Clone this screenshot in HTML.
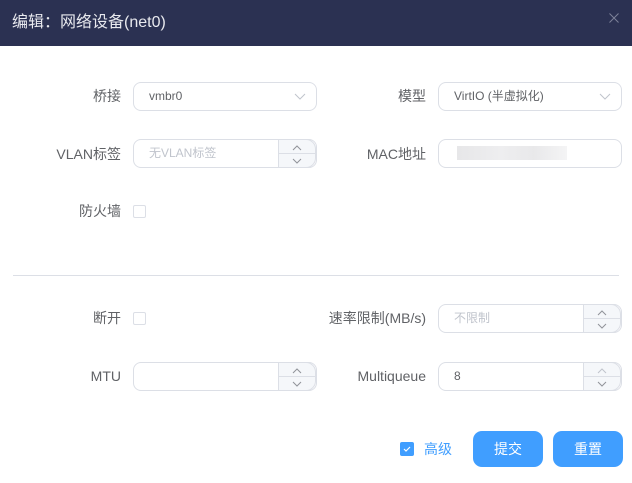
<!DOCTYPE html>
<html><head><meta charset="utf-8"><style>
*{box-sizing:border-box;margin:0;padding:0}
body{width:632px;height:483px;background:#fff;position:relative;overflow:hidden;font-family:"Liberation Sans","Noto Sans CJK SC",sans-serif;}
.hdr{position:absolute;left:0;top:0;width:632px;height:46px;background:#2b3152;color:#e8e9ee;font-size:16px;line-height:46px;padding-left:12px}
.x{position:absolute;left:609px;top:13px;width:10px;height:10px}
.lbl{position:absolute;font-size:14px;color:#606266;text-align:right;line-height:20px}
.in{position:absolute;height:29px;border:1px solid #dcdfe6;border-radius:8px;font-size:12px;color:#606266;line-height:27px;padding-left:15px;background:#fff}
.ph{color:#c0c4cc}
.ar{position:absolute;right:10px;top:7px;width:12px;height:12px}
.sp{position:absolute;right:0;top:-1px;width:38px;height:29px;border:1px solid #dcdfe6;background:#f5f7fa;border-radius:0 10px 10px 0}
.sp:after{content:"";position:absolute;left:0;right:0;top:13px;border-top:1px solid #dcdfe6}
.sp svg{position:absolute;left:13px;width:10px;height:6px}
.cb{position:absolute;width:13px;height:13px;border:1px solid #dcdfe6;border-radius:2px;background:#fff}
.btn{position:absolute;top:431px;height:36px;background:#409eff;color:#fff;border-radius:9px;font-size:14px;text-align:center;line-height:36px}
</style></head><body>
<div class="hdr">编辑：网络设备(net0)<svg class="x" viewBox="0 0 10 10"><path d="M0.5 0.5l9 9M9.5 0.5l-9 9" stroke="#7d8199" stroke-width="1"/></svg></div>

<div class="lbl" style="right:511px;top:86px">桥接</div>
<div class="in" style="left:133px;top:82px;width:184px">vmbr0<svg class="ar" viewBox="0 0 12 12"><path d="M1 4l5 5 5-5" fill="none" stroke="#c0c4cc" stroke-width="1"/></svg></div>
<div class="lbl" style="right:206px;top:86px">模型</div>
<div class="in" style="left:438px;top:82px;width:184px">VirtIO (半虚拟化)<svg class="ar" viewBox="0 0 12 12"><path d="M1 4l5 5 5-5" fill="none" stroke="#c0c4cc" stroke-width="1"/></svg></div>

<div class="lbl" style="right:511px;top:144px">VLAN标签</div>
<div class="in ph" style="left:133px;top:139px;width:184px">无VLAN标签<div class="sp"><svg style="top:5px" viewBox="0 0 10 6"><path d="M1 5l4-4 4 4" fill="none" stroke="#909399"/></svg><svg style="top:18px" viewBox="0 0 10 6"><path d="M1 1l4 4 4-4" fill="none" stroke="#909399"/></svg></div></div>
<div class="lbl" style="right:206px;top:144px">MAC地址</div>
<div class="in" style="left:438px;top:139px;width:184px"><div style="position:absolute;left:18px;top:6px;width:110px;height:14px;background:linear-gradient(90deg,#e4e4e6,#ececee 40%,#e6e6e8 70%,#f3f3f4);opacity:.9"></div></div>

<div class="lbl" style="right:511px;top:201px">防火墙</div>
<div class="cb" style="left:133px;top:205px"></div>

<div style="position:absolute;left:13px;top:275px;width:606px;border-top:1px solid #dcdfe6"></div>

<div class="lbl" style="right:511px;top:308px">断开</div>
<div class="cb" style="left:133px;top:312px"></div>
<div class="lbl" style="right:206px;top:308px">速率限制(MB/s)</div>
<div class="in ph" style="left:438px;top:304px;width:184px">不限制<div class="sp"><svg style="top:5px" viewBox="0 0 10 6"><path d="M1 5l4-4 4 4" fill="none" stroke="#909399"/></svg><svg style="top:18px" viewBox="0 0 10 6"><path d="M1 1l4 4 4-4" fill="none" stroke="#909399"/></svg></div></div>

<div class="lbl" style="right:511px;top:366px">MTU</div>
<div class="in" style="left:133px;top:362px;width:184px"><div class="sp"><svg style="top:5px" viewBox="0 0 10 6"><path d="M1 5l4-4 4 4" fill="none" stroke="#909399"/></svg><svg style="top:18px" viewBox="0 0 10 6"><path d="M1 1l4 4 4-4" fill="none" stroke="#909399"/></svg></div></div>
<div class="lbl" style="right:206px;top:366px">Multiqueue</div>
<div class="in" style="left:438px;top:362px;width:184px">8<div class="sp"><svg style="top:5px" viewBox="0 0 10 6"><path d="M1 5l4-4 4 4" fill="none" stroke="#c0c4cc"/></svg><svg style="top:18px" viewBox="0 0 10 6"><path d="M1 1l4 4 4-4" fill="none" stroke="#909399"/></svg></div></div>

<div style="position:absolute;left:400px;top:442px;width:14px;height:14px;background:#409eff;border-radius:2px"><svg width="14" height="14" viewBox="0 0 14 14"><path d="M4 7l2 2 4-4" fill="none" stroke="#fff" stroke-width="1.2"/></svg></div>
<div style="position:absolute;left:424px;top:439px;font-size:14px;color:#409eff;line-height:20px">高级</div>
<div class="btn" style="left:473px;width:70px">提交</div>
<div class="btn" style="left:553px;width:70px">重置</div>
</body></html>
